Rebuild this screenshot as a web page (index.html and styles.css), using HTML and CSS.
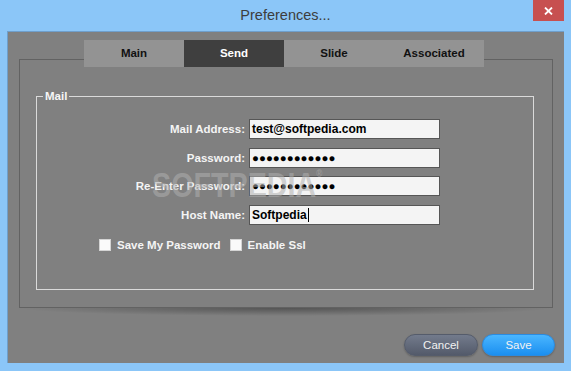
FILE: index.html
```html
<!DOCTYPE html>
<html lang="en">
<head>
  <meta charset="UTF-8" />
  <title>Preferences...</title>
  <link rel="stylesheet" href="styles.css">
</head>
<body>
  <div class="window">
    <div class="titlebar">
      <span class="title">Preferences...</span>
      <div class="close" role="button" aria-label="Close">
        <svg width="9" height="8" viewBox="0 0 9 8"><path d="M1 0.5 L8 7.5 M8 0.5 L1 7.5" stroke="#fff" stroke-width="1.8" /></svg>
      </div>
    </div>

    <div class="client">
      <div class="tabs">
        <div class="tab">Main</div>
        <div class="tab active">Send</div>
        <div class="tab">Slide</div>
        <div class="tab">Associated</div>
      </div>

      <div class="panel">
        <fieldset class="group">
          <legend>Mail</legend>
          <div class="form">
            <label>Mail Address:</label>
            <div class="field">test@softpedia.com</div>
            <label>Password:</label>
            <div class="field dots">●●●●●●●●●●●●</div>
            <label>Re-Enter Password:</label>
            <div class="field dots">●●●●●●●●●●●●</div>
            <label>Host Name:</label>
            <div class="field">Softpedia<span class="caret"></span></div>
          </div>
          <div class="checks">
            <span class="box"></span><span class="check-label">Save My Password</span>
            <span class="box"></span><span class="check-label">Enable Ssl</span>
          </div>
        </fieldset>
      </div>
      <div class="panel-shadow"></div>

      <div class="actions">
        <div class="btn cancel">Cancel</div>
        <div class="btn save">Save</div>
      </div>

      <!-- watermark from the screenshot -->
      <div class="watermark">SOFTPEDIA<span class="reg">®</span></div>
    </div>
  </div>
</body>
</html>
```

FILE: styles.css
```css
body {
  margin: 0;
  background: #8bc6f8;
  font-family: 'Liberation Sans', Arial, sans-serif;
}

.window {
  width: 571px;
  height: 371px;
  display: flex;
  flex-direction: column;
}

.titlebar {
  height: 31px;
  display: grid;
  grid-template-columns: 1fr auto 1fr;
  align-items: start;
}

.title {
  grid-column: 2;
  font-size: 14.5px;
  line-height: 30px;
  color: #3d3d3d;
}

.close {
  grid-column: 3;
  justify-self: end;
  margin-right: 7px;
  width: 31px;
  height: 21px;
  background: #c75050;
  display: flex;
  align-items: center;
  justify-content: center;
}

.client {
  position: relative;
  height: 332px;
  box-sizing: border-box;
  margin: 0 7px 0 7px;
  padding-top: 8px;
  background: #808080;
  border-top: 1px solid #6f9fcc;
  border-left: 1px solid #6f9fcc;
  display: flex;
  flex-direction: column;
}

.tabs {
  display: flex;
  margin-left: 76px;
  position: relative;
  z-index: 1;
}

.tab {
  width: 100px;
  height: 27px;
  line-height: 27px;
  text-align: center;
  background: #939393;
  color: #111;
  font-size: 11.5px;
  font-weight: bold;
}

.tab.active {
  background: #3f3f3f;
  color: #fff;
}

.panel {
  margin: -8px 11px 0 11px;
  height: 249px;
  box-sizing: border-box;
  border: 1px solid #626262;
  padding: 29px 18px 0 16px;
}

.group {
  margin: 0;
  padding: 0;
  height: 201px;
  box-sizing: border-box;
  border: 1px solid #dadada;
}

.group legend {
  margin-left: 6px;
  padding: 0 2px;
  line-height: 14px;
  font-size: 11.5px;
  font-weight: bold;
  color: #f6f6f6;
}

.form {
  display: grid;
  grid-template-columns: 208px 191px;
  grid-auto-rows: 20px;
  column-gap: 4px;
  row-gap: 8.67px;
  margin-top: 16px;
}

.form label {
  align-self: center;
  text-align: right;
  font-size: 11.5px;
  font-weight: bold;
  color: #f4f4f4;
}

.field {
  box-sizing: border-box;
  height: 20px;
  background: #f4f4f4;
  border: 1px solid #565656;
  padding: 0 2px;
  font-size: 12px;
  font-weight: bold;
  line-height: 18px;
  color: #000;
  display: flex;
  align-items: center;
}

.field.dots {
  font-size: 11.5px;
}

.caret {
  display: inline-block;
  width: 1px;
  height: 14px;
  background: #000;
  margin-left: 1px;
}

.checks {
  display: flex;
  align-items: center;
  margin: 14px 0 0 62px;
}

.box {
  width: 12px;
  height: 12px;
  box-sizing: border-box;
  background: #fafafa;
  border: 1px solid #d4d4d4;
  margin-right: 6px;
}

.check-label {
  font-size: 11.5px;
  font-weight: bold;
  color: #f4f4f4;
  margin-right: 9px;
}

.panel-shadow {
  height: 8px;
  margin: 0 11px 0 11px;
  background: radial-gradient(ellipse 50% 100% at 50% 0, rgba(0,0,0,0.35), rgba(0,0,0,0) 100%);
}

.actions {
  display: flex;
  justify-content: flex-end;
  gap: 4px;
  margin-top: 18px;
  padding-right: 9px;
}

.btn {
  height: 22px;
  box-sizing: border-box;
  border-radius: 11px;
  font-size: 11.5px;
  line-height: 20px;
  text-align: center;
  color: #f2f2f2;
  box-shadow: 0 1px 2px rgba(0,0,0,0.25);
}

.btn.cancel {
  width: 74px;
  background: linear-gradient(#737b8c, #535a6a);
  border: 1px solid #555c6b;
}

.btn.save {
  width: 73px;
  background: linear-gradient(#4ab6ff, #1b8ff0);
  border: 1px solid #2a8be0;
}

.watermark {
  position: absolute;
  left: 144px;
  top: 135px;
  font-size: 35px;
  line-height: 35px;
  font-weight: bold;
  color: rgba(176,176,176,0.55);
  transform: scaleX(0.82);
  transform-origin: left top;
  pointer-events: none;
}

.watermark .reg {
  font-size: 10px;
  vertical-align: top;
  line-height: 14px;
}
```
